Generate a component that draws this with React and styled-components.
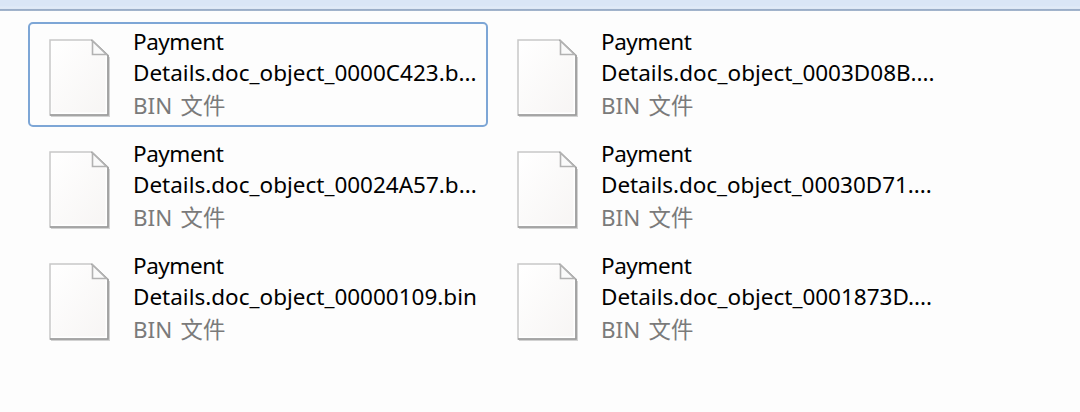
import React from "react";
import styled, { createGlobalStyle } from "styled-components";

const GlobalStyle = createGlobalStyle`
  body { margin: 0; background: #fdfdfd; overflow: hidden; }
  * { box-sizing: border-box; }
`;

const Window = styled.main`
  width: 1080px;
  height: 412px;
  background: #fdfdfd;
  font-family: "Noto Sans", "Noto Sans CJK SC", sans-serif;
`;

const Toolbar = styled.div`
  height: 11px;
  background: linear-gradient(#dae6f6 0 6px, #e1ebf8 7px, #dde7f4 9px, #97abc6 9px, #a5b6cd 11px);
`;

const FileGrid = styled.div`
  display: grid;
  grid-template-columns: 460px 460px;
  grid-auto-rows: 105px;
  gap: 7px 8px;
  padding: 11px 0 0 28px;
`;

const Tile = styled.article`
  display: flex;
  border: 2px solid ${(p) => (p.$selected ? "#7da6d6" : "transparent")};
  border-radius: 5px;
  padding-left: 18px;
`;

const Icon = styled.svg`
  flex: none;
  width: 64px;
  height: 84px;
  margin-top: 13px;
`;

const Label = styled.div`
  margin-left: 21px;
  padding-top: 2px;
  white-space: pre;
`;

const Line = styled.div`
  height: 31px;
  line-height: 31px;
  font-size: 22.5px;
  letter-spacing: ${(p) => p.$spacing || 0}px;
  color: #000;
`;

const Kind = styled.div`
  height: 33px;
  line-height: 33px;
  padding-top: 1px;
  font-size: 22.4px;
  word-spacing: 2.6px;
  color: #7a7a7a;
`;

const FileIcon = () => (
  <Icon viewBox="0 0 64 84">
    <defs>
      <linearGradient id="paper" x1="0" y1="0" x2="1" y2="1">
        <stop offset="0" stopColor="#ffffff" />
        <stop offset="1" stopColor="#f7f5f4" />
      </linearGradient>
    </defs>
    <path d="M3 79H61V20" fill="none" stroke="#d2d2d2" strokeWidth="2" />
    <path d="M2 3H43.5L60 18.5V78H2Z" fill="#fff" stroke="#c8c8c8" strokeWidth="1.5" />
    <path d="M3.500 4.500H43L57.500 19V75.500H3.500Z" fill="url(#paper)" />
    <path d="M43.500 3L60 18.500V78H2" fill="none" stroke="#999" strokeWidth="1.600" />
    <path d="M44.500 4V17.500H58.500Z" fill="#fafafa" stroke="#b2b2b2" strokeWidth="1.600" />
  </Icon>
);

const files = [
  { name: "Details.doc_object_0000C423.b...", selected: true },
  { name: "Details.doc_object_0003D08B...." },
  { name: "Details.doc_object_00024A57.b..." },
  { name: "Details.doc_object_00030D71....", spacing: -0.04 },
  { name: "Details.doc_object_00000109.bin" },
  { name: "Details.doc_object_0001873D...." },
];

export default function App() {
  return (
    <Window>
      <GlobalStyle />
      <Toolbar />
      <FileGrid>
        {files.map((f) => (
          <Tile key={f.name} $selected={f.selected}>
            <FileIcon />
            <Label>
              <Line $spacing={-0.45}>Payment</Line>
              <Line $spacing={f.spacing}>{f.name}</Line>
              <Kind>BIN 文件</Kind>
            </Label>
          </Tile>
        ))}
      </FileGrid>
    </Window>
  );
}
